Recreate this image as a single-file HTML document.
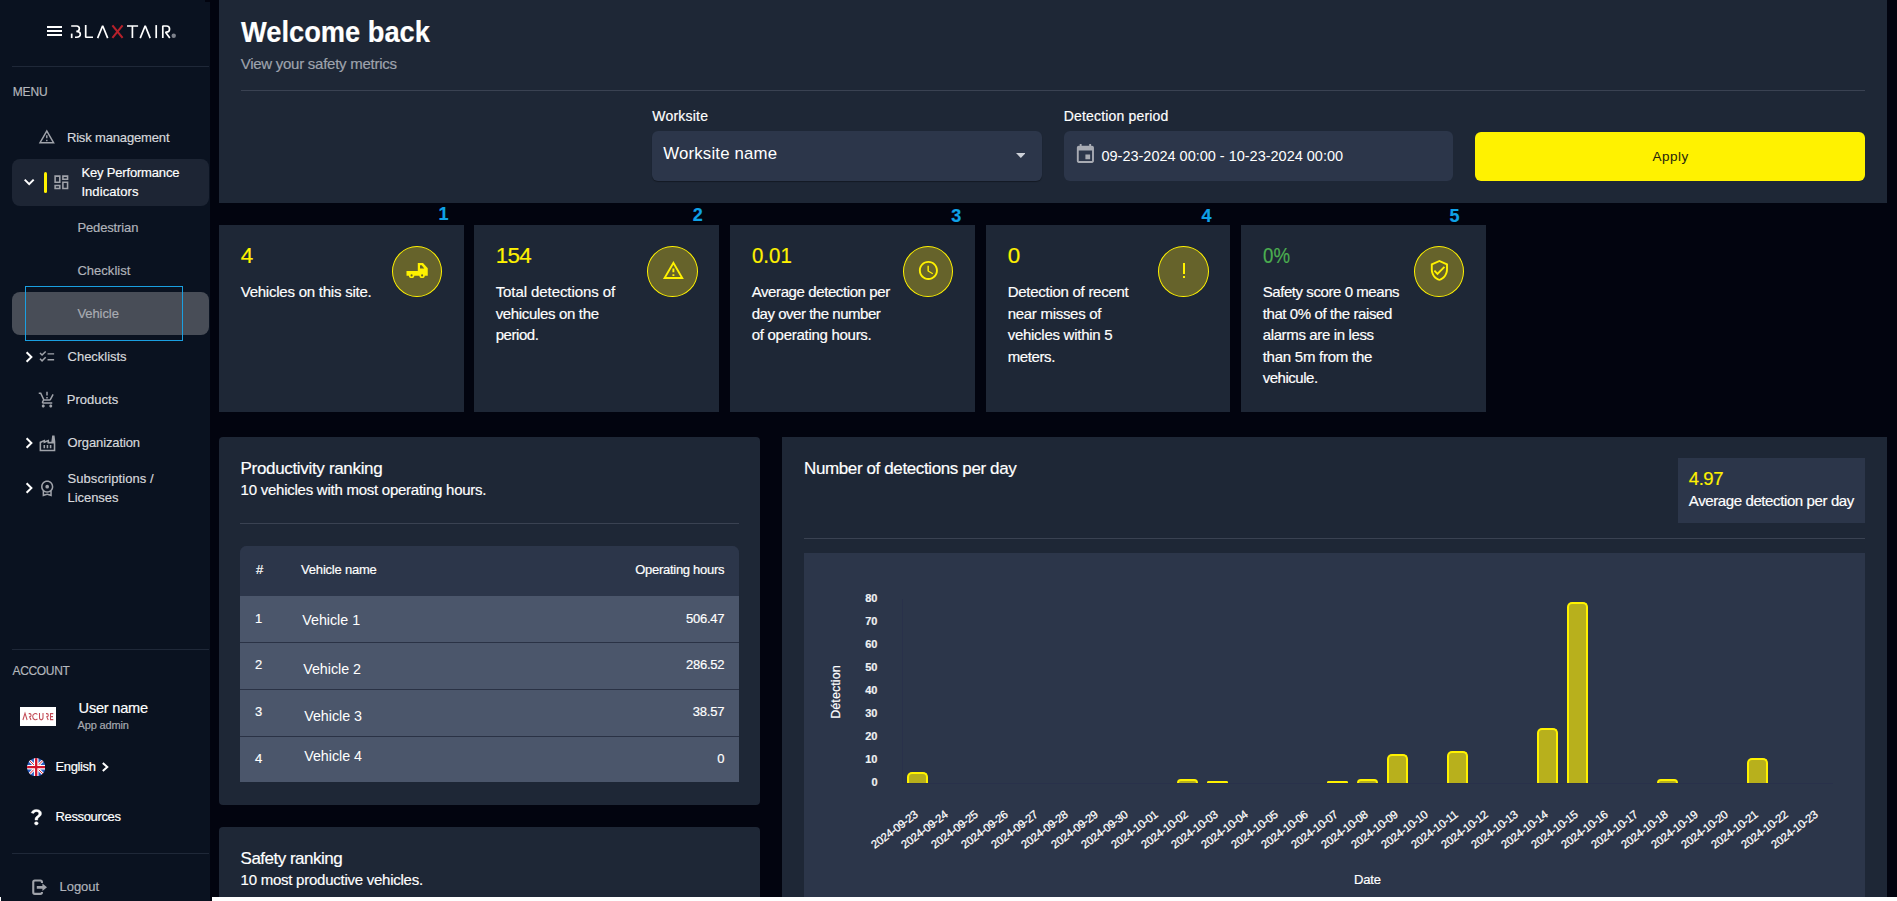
<!DOCTYPE html>
<html lang="en">
<head>
<meta charset="utf-8">
<title>Dashboard</title>
<style>
*{box-sizing:border-box;margin:0;padding:0}
html,body{width:1897px;height:901px;overflow:hidden;background:#02040f;font-family:"Liberation Sans",sans-serif;color:#fff}
.abs{position:absolute}
.t{position:absolute;white-space:nowrap;line-height:1;-webkit-text-stroke:0.18px}
#side{position:absolute;left:0;top:0;width:210px;height:901px;background:#0a1220}
.hr{position:absolute;height:1px;background:#1f2838}
.card{position:absolute;background:#1e2736}
</style>
</head>
<body>
<div id="side"></div>
<div class="abs" style="left:205px;top:0;width:5px;height:1.6px;background:#02040f"></div>
<div class="card" style="left:219px;top:0;width:1668px;height:203px"></div>
<div class="card" style="left:219px;top:225px;width:245px;height:187px"></div>
<div class="card" style="left:474px;top:225px;width:245px;height:187px"></div>
<div class="card" style="left:730px;top:225px;width:245px;height:187px"></div>
<div class="card" style="left:986px;top:225px;width:244px;height:187px"></div>
<div class="card" style="left:1241px;top:225px;width:245px;height:187px"></div>
<div class="card" style="left:219px;top:437px;width:541px;height:368px;border-radius:4px"></div>
<div class="card" style="left:219px;top:827px;width:541px;height:80px;border-radius:4px 4px 0 0"></div>
<div class="card" style="left:782px;top:437px;width:1105px;height:470px"></div>
<!-- sidebar -->
<div class="abs" style="left:46.7px;top:26.2px;width:15.4px;height:1.8px;background:#fff"></div>
<div class="abs" style="left:46.7px;top:30.15px;width:15.4px;height:1.8px;background:#fff"></div>
<div class="abs" style="left:46.7px;top:34.1px;width:15.4px;height:1.8px;background:#fff"></div>
<svg class="abs" style="left:65px;top:20px" width="120" height="25" viewBox="65 20 120 25" fill="none" stroke="#fff" stroke-width="1.7" stroke-linejoin="bevel">
<path d="M71.2 26 H76.6 C80.3 26 80.3 31.4 76.3 31.4 C81.6 31.4 81.6 37.25 76.6 37.25 H75"/>
<path d="M71.7 33.6 V38.1"/>
<path d="M85.7 25.1 V37.25 H93"/>
<path d="M97.6 38.1 L102.65 25.7 L107.7 38.1"/>
<path d="M112.4 25.4 L122.6 37.9 M122.6 25.4 L112.4 37.9" stroke="#b6212b" stroke-width="2.1"/>
<path d="M127 26 H138.1 M132.4 26 V38.1"/>
<path d="M140.2 38.1 L145.2 25.7 L150.2 38.1"/>
<path d="M156.2 25.1 V38.1"/>
<path d="M162.8 38.1 V26 H166.4 C170.6 26 170.6 32.2 166.4 32.2 H165.6 L169.8 38.1"/>
<circle cx="173.7" cy="35.8" r="2.2" fill="#7d818b" stroke="none"/>
</svg>
<div class="hr" style="left:12px;top:66px;width:197px"></div>
<span class="t" style="top:86px;font-size:12px;color:#b4b7bd;left:12.7px;letter-spacing:-0.15px;">MENU</span>
<svg class="abs" style="left:38.3px;top:128.4px" width="17.6" height="17.6" viewBox="0 0 24 24" fill="#a0a3aa" ><path d="M12 5.99L19.53 19H4.47L12 5.99M12 2L1 21h22L12 2zm1 14h-2v2h2v-2zm0-6h-2v4h2v-4z"/></svg>
<span class="t" style="top:131px;font-size:13px;color:#d6d8dc;left:66.9px;letter-spacing:-0.15px;">Risk management</span>
<div class="abs" style="left:12px;top:159px;width:197px;height:47px;border-radius:8px;background:#1d2534"></div>
<svg class="abs" style="left:23px;top:177px" width="13" height="10" viewBox="0 0 13 10" fill="none" stroke="#fff" stroke-width="2"><path d="M1.7 2.6 L6.2 7.1 L10.7 2.6"/></svg>
<div class="abs" style="left:44px;top:172px;width:3.2px;height:21px;border-radius:2px;background:#fff200"></div>
<svg class="abs" style="left:51.7px;top:172.7px" width="18.7" height="18.7" viewBox="0 0 24 24" fill="#a0a3aa" ><path d="M19 5v2h-4V5h4M9 5v6H5V5h4m10 8v6h-4v-6h4M9 17v2H5v-2h4M21 3h-8v6h8V3zM11 3H3v10h8V3zm10 8h-8v10h8V11zm-10 4H3v6h8v-6z"/></svg>
<span class="t" style="top:166px;font-size:13px;color:#fff;left:81.4px;letter-spacing:-0.17px;">Key Performance</span>
<span class="t" style="top:185px;font-size:13px;color:#fff;left:81.4px;letter-spacing:0.07px;">Indicators</span>
<span class="t" style="top:221px;font-size:13px;color:#b0b3ba;left:77.4px;letter-spacing:-0.13px;">Pedestrian</span>
<span class="t" style="top:264px;font-size:13px;color:#b0b3ba;left:77.4px;letter-spacing:0.03px;">Checklist</span>
<div class="abs" style="left:12px;top:292px;width:197px;height:43px;border-radius:8px;background:#484d57"></div>
<span class="t" style="top:307px;font-size:13px;color:#a9acb3;left:77.4px;letter-spacing:-0.07px;">Vehicle</span>
<div class="abs" style="left:25px;top:286px;width:158px;height:55px;border:1px solid #1a9fe0"></div>
<svg class="abs" style="left:24.9px;top:351.3px" width="9" height="12" viewBox="0 0 9 12" fill="none" stroke="#fff" stroke-width="2"><path d="M1.6 1.2 L6.4 6 L1.6 10.8"/></svg>
<svg class="abs" style="left:38.4px;top:348.2px" width="17.6" height="17.6" viewBox="0 0 24 24" fill="#a0a3aa" ><path d="M22 7h-9v2h9V7zm0 8h-9v2h9v-2zM5.54 11L2 7.46l1.41-1.41 2.12 2.12 4.24-4.24 1.41 1.41L5.54 11zm0 8L2 15.46l1.41-1.41 2.12 2.12 4.24-4.24 1.41 1.41L5.54 19z"/></svg>
<span class="t" style="top:350px;font-size:13px;color:#d6d8dc;left:67.6px;letter-spacing:-0.03px;">Checklists</span>
<svg class="abs" style="left:38.4px;top:391px" width="18" height="18" viewBox="0 0 24 24" fill="#a0a3aa" ><path d="M13 10h-2V8h2v2zm0-4h-2V1h2v5zM7 18c-1.1 0-1.99.9-1.99 2S5.9 22 7 22s2-.9 2-2-.9-2-2-2zm10 0c-1.1 0-1.99.9-1.99 2s.89 2 1.99 2 2-.9 2-2-.9-2-2-2zm-8.9-5h7.45c.75 0 1.41-.41 1.75-1.03L21 4.96 19.25 4l-3.7 7H8.53L4.27 2H1v2h2l3.6 7.59-1.35 2.44C4.52 15.37 5.48 17 7 17h12v-2H7l1.1-2z"/></svg>
<span class="t" style="top:393px;font-size:13px;color:#d6d8dc;left:66.7px;letter-spacing:0.03px;">Products</span>
<svg class="abs" style="left:24.9px;top:437.2px" width="9" height="12" viewBox="0 0 9 12" fill="none" stroke="#fff" stroke-width="2"><path d="M1.6 1.2 L6.4 6 L1.6 10.8"/></svg>
<svg class="abs" style="left:37.6px;top:433.8px" width="18.9" height="18.9" viewBox="0 0 24 24" fill="#a0a3aa" ><path d="M22 22H2V10l7-3v2l5-2v3h3l1-8h3l1 8V22zM12 9.95l-5 2V10l-3 1.32V20h16v-8h-8V9.95zM11 18h2v-4h-2V18zM7 18h2v-4H7V18zM17 14h-2v4h2V14z"/></svg>
<span class="t" style="top:436px;font-size:13px;color:#d6d8dc;left:67.6px;letter-spacing:-0.11px;">Organization</span>
<svg class="abs" style="left:24.9px;top:482px" width="9" height="12" viewBox="0 0 9 12" fill="none" stroke="#fff" stroke-width="2"><path d="M1.6 1.2 L6.4 6 L1.6 10.8"/></svg>
<svg class="abs" style="left:37.9px;top:479px" width="18.4" height="18.4" viewBox="0 0 24 24" fill="#a0a3aa" ><path d="M12 7.6a2.4 2.4 0 1 0 0 4.8a2.4 2.4 0 1 0 0-4.8zM20 10c0-4.42-3.58-8-8-8s-8 3.58-8 8c0 2.03.76 3.87 2 5.28V23l6-2 6 2v-7.72c1.24-1.41 2-3.25 2-5.28zm-8-6c3.31 0 6 2.69 6 6s-2.69 6-6 6-6-2.69-6-6 2.69-6 6-6zm0 15l-4 1.02v-3.1c1.18.68 2.54 1.08 4 1.08s2.82-.4 4-1.08v3.1L12 19z"/></svg>
<span class="t" style="top:472px;font-size:13px;color:#d6d8dc;left:67.6px;letter-spacing:0.05px;">Subscriptions /</span>
<span class="t" style="top:491px;font-size:13px;color:#d6d8dc;left:67.6px;letter-spacing:-0.07px;">Licenses</span>
<div class="hr" style="left:12px;top:649px;width:197px"></div>
<span class="t" style="top:665px;font-size:12px;color:#b4b7bd;left:12.5px;letter-spacing:-0.34px;">ACCOUNT</span>
<div class="abs" style="left:20px;top:707px;width:36px;height:19px;background:#fff"></div>
<svg class="abs" style="left:20px;top:707px" width="36" height="19" viewBox="20 707 36 19" fill="none" stroke="#c24a55" stroke-width="1.05">
<path d="M22.9 720 L25 713.2 L27.1 720"/>
<path d="M28.7 713.6 H29.6 C31.6 713.6 31.6 716.7 29.6 716.7 L31 720"/>
<path d="M37.4 714.5 C35.8 712.7 32.7 713.5 32.7 716.6 C32.7 719.8 35.8 720.5 37.5 718.8"/>
<path d="M39.5 713.1 V717.6 C39.5 720.6 43 720.6 43 717.6 V713.1"/>
<path d="M46 713.6 H46.8 C48.8 713.6 48.8 716.7 46.8 716.7 L48.2 720"/>
<path d="M53.3 713.6 H50.5 V719.6 H53.3 M50.5 716.6 H53"/>
</svg>
<span class="t" style="top:701px;font-size:14.6px;color:#fff;left:78.6px;letter-spacing:-0.23px;">User name</span>
<span class="t" style="top:720px;font-size:11px;color:#a7aab1;left:77.6px;letter-spacing:-0.15px;">App admin</span>
<svg class="abs" style="left:26.8px;top:757.5px" width="18.4" height="18.4" viewBox="0 0 60 60">
<defs><clipPath id="fc"><circle cx="30" cy="30" r="30"/></clipPath></defs>
<g clip-path="url(#fc)">
<rect width="60" height="60" fill="#2b5dc0"/>
<path d="M0 0 L60 60 M60 0 L0 60" stroke="#fff" stroke-width="9"/>
<path d="M0 0 L60 60 M60 0 L0 60" stroke="#d0142c" stroke-width="3"/>
<path d="M30 0 V60 M0 30 H60" stroke="#fff" stroke-width="15"/>
<path d="M30 0 V60 M0 30 H60" stroke="#d0142c" stroke-width="7.5"/>
</g></svg>
<span class="t" style="top:760px;font-size:13px;color:#fff;left:55.5px;letter-spacing:-0.36px;">English</span>
<svg class="abs" style="left:101.3px;top:760.9px" width="10" height="13" viewBox="0 0 10 13" fill="none" stroke="#fff" stroke-width="2"><path d="M1.8 1.9 L6.3 6 L1.8 10.1"/></svg>
<svg class="abs" style="left:24.8px;top:807.1px" width="22.7" height="19.6" viewBox="0 0 24 24" preserveAspectRatio="none" fill="#fff" stroke="#fff" stroke-width="0.45"><path d="M11.07 12.85c.77-1.39 2.25-2.21 3.11-3.44.91-1.29.4-3.7-2.18-3.7-1.69 0-2.52 1.28-2.87 2.34L6.54 6.96C7.25 4.83 9.18 3 11.99 3c2.35 0 3.96 1.07 4.78 2.41.7 1.15 1.11 3.3.03 4.9-1.2 1.77-2.35 2.31-2.97 3.45-.25.46-.35.76-.35 2.24h-2.89c-.01-.78-.13-2.05.48-3.15zM14 20c0 1.1-.9 2-2 2s-2-.9-2-2 .9-2 2-2 2 .9 2 2z"/></svg>
<span class="t" style="top:810px;font-size:13px;color:#fff;left:55.5px;letter-spacing:-0.36px;">Ressources</span>
<div class="hr" style="left:12px;top:853px;width:197px"></div>
<svg class="abs" style="left:31px;top:878px" width="18" height="19" viewBox="31 878 18 19" fill="none">
<path d="M41.95 882.9 V882 Q41.95 880.45 40.4 880.45 H34.8 Q33.25 880.45 33.25 882 V892.3 Q33.25 893.85 34.8 893.85 H40.4 Q41.95 893.85 41.95 892.3 V891.9" stroke="#a0a3aa" stroke-width="2.1"/>
<path d="M36.8 886 H42.4 V883.6 L47 887.35 L42.4 891.1 V888.7 H36.8 Z" fill="#a0a3aa"/>
</svg>
<span class="t" style="top:880px;font-size:13px;color:#b0b3ba;left:59.5px;letter-spacing:-0.03px;">Logout</span>
<!-- header -->
<span class="t" style="top:17px;font-size:30px;color:#fff;left:240.7px;font-weight:bold;transform:scaleX(0.9087);transform-origin:0 0;">Welcome back</span>
<span class="t" style="top:56px;font-size:15px;color:#9ea3ad;left:240.7px;letter-spacing:-0.26px;">View your safety metrics</span>
<div class="hr" style="left:241px;top:90px;width:1624px;background:#3a4252"></div>
<span class="t" style="top:109px;font-size:14px;color:#fff;left:652.3px;letter-spacing:0.21px;">Worksite</span>
<div class="abs" style="left:652px;top:131px;width:390px;height:49.5px;border-radius:6px;background:#2c364a;box-shadow:0 1px 1px rgba(0,0,0,.35)"></div>
<span class="t" style="top:146px;font-size:16.8px;color:#fff;left:663.2px;letter-spacing:0.19px;-webkit-text-stroke:0;">Worksite name</span>
<svg class="abs" style="left:1015.5px;top:152.8px" width="9.6" height="5" viewBox="0 0 10 5" fill="#cdd1d8"><path d="M0 0 L10 0 L5 5Z"/></svg>
<span class="t" style="top:109px;font-size:14px;color:#fff;left:1063.8px;letter-spacing:0.17px;">Detection period</span>
<div class="abs" style="left:1064px;top:131px;width:389px;height:49.5px;border-radius:6px;background:#2c364a"></div>
<svg class="abs" style="left:1073.8px;top:143px" width="22.8" height="22.8" viewBox="0 0 24 24" fill="#a8abb3"><path d="M17 12h-5v5h5v-5zM16 1v2H8V1H6v2H5c-1.11 0-1.99.9-1.99 2L3 19c0 1.1.89 2 2 2h14c1.1 0 2-.9 2-2V5c0-1.1-.9-2-2-2h-1V1h-2zm3 18H5V8h14v11z"/></svg>
<span class="t" style="top:149px;font-size:14.5px;color:#fff;left:1101.5px;letter-spacing:-0.01px;-webkit-text-stroke:0;">09-23-2024 00:00 - 10-23-2024 00:00</span>
<div class="abs" style="left:1475px;top:132px;width:390px;height:48.5px;border-radius:6px;background:#fff200"></div>
<span class="t" style="top:150px;font-size:13.5px;color:#25250f;left:1652.4px;letter-spacing:0.5px;-webkit-text-stroke:0;">Apply</span>
<!-- kpi -->
<span class="t" style="top:205px;font-size:18px;color:#0fa1e6;left:438.6px;font-weight:bold;">1</span>
<span class="t" style="top:206px;font-size:18px;color:#0fa1e6;left:692.7px;font-weight:bold;">2</span>
<span class="t" style="top:207px;font-size:18px;color:#0fa1e6;left:951.3px;font-weight:bold;">3</span>
<span class="t" style="top:207px;font-size:18px;color:#0fa1e6;left:1201.4px;font-weight:bold;">4</span>
<span class="t" style="top:207px;font-size:18px;color:#0fa1e6;left:1449.4px;font-weight:bold;">5</span>
<span class="t" style="top:245px;font-size:22.4px;color:#fff200;left:240.7px;">4</span>
<span class="t" style="top:284px;font-size:15px;color:#fff;left:240.7px;letter-spacing:-0.23px;">Vehicles on this site.</span>
<div class="abs" style="left:392px;top:245.8px;width:50.1px;height:51px;border-radius:50%;background:#66632b;border:1px solid #fff200"></div>
<svg class="abs" style="left:400px;top:258px" width="35" height="25" viewBox="400 258 35 25" fill="#fff200"><path fill-rule="evenodd" d="M406.5 271.1 H417.8 V263 H423 L427.75 268.3 V275.8 H406.5 Z M420 265.3 H421.7 L424.3 268.6 H420 Z"/><circle cx="411.6" cy="275.4" r="2.7"/><circle cx="422.1" cy="275.4" r="2.7"/><circle cx="411.6" cy="275.4" r="1.05" fill="#66632b"/><circle cx="422.1" cy="275.4" r="1.05" fill="#66632b"/></svg>
<span class="t" style="top:245px;font-size:22.4px;color:#fff200;left:495.7px;letter-spacing:-0.68px;">154</span>
<span class="t" style="top:284px;font-size:15px;color:#fff;left:495.7px;letter-spacing:-0.08px;">Total detections of</span>
<span class="t" style="top:306px;font-size:15px;color:#fff;left:495.7px;letter-spacing:-0.34px;">vehicules on the</span>
<span class="t" style="top:327px;font-size:15px;color:#fff;left:495.7px;letter-spacing:-0.45px;">period.</span>
<div class="abs" style="left:647px;top:245.8px;width:50.8px;height:51px;border-radius:50%;background:#66632b;border:1px solid #fff200"></div>
<svg class="abs" style="left:661.5px;top:259.20000000000005px" width="22.8" height="22.8" viewBox="0 0 24 24" fill="#fff200"><path d="M12 5.99L19.53 19H4.47L12 5.99M12 2L1 21h22L12 2zm1 14h-2v2h2v-2zm0-6h-2v4h2v-4z"/></svg>
<span class="t" style="top:245px;font-size:22.4px;color:#fff200;left:751.7px;transform:scaleX(0.913);transform-origin:0 0;">0.01</span>
<span class="t" style="top:284px;font-size:15px;color:#fff;left:751.7px;letter-spacing:-0.4px;">Average detection per</span>
<span class="t" style="top:306px;font-size:15px;color:#fff;left:751.7px;letter-spacing:-0.47px;">day over the number</span>
<span class="t" style="top:327px;font-size:15px;color:#fff;left:751.7px;letter-spacing:-0.28px;">of operating hours.</span>
<div class="abs" style="left:903px;top:245.8px;width:50.1px;height:51px;border-radius:50%;background:#66632b;border:1px solid #fff200"></div>
<svg class="abs" style="left:917.15px;top:259.20000000000005px" width="22.8" height="22.8" viewBox="0 0 24 24" fill="#fff200"><path d="M11.99 2C6.47 2 2 6.48 2 12s4.47 10 9.99 10C17.52 22 22 17.52 22 12S17.52 2 11.99 2zM12 20c-4.42 0-8-3.58-8-8s3.58-8 8-8 8 3.58 8 8-3.58 8-8 8zm.5-13H11v6l5.25 3.15.75-1.23-4.5-2.67z"/></svg>
<span class="t" style="top:245px;font-size:22.4px;color:#fff200;left:1007.7px;">0</span>
<span class="t" style="top:284px;font-size:15px;color:#fff;left:1007.7px;letter-spacing:-0.27px;">Detection of recent</span>
<span class="t" style="top:306px;font-size:15px;color:#fff;left:1007.7px;letter-spacing:-0.29px;">near misses of</span>
<span class="t" style="top:327px;font-size:15px;color:#fff;left:1007.7px;letter-spacing:-0.27px;">vehicles within 5</span>
<span class="t" style="top:349px;font-size:15px;color:#fff;left:1007.7px;letter-spacing:-0.4px;">meters.</span>
<div class="abs" style="left:1158px;top:245.8px;width:50.8px;height:51px;border-radius:50%;background:#66632b;border:1px solid #fff200"></div>
<div class="abs" style="left:1182.9px;top:263px;width:2.6px;height:11px;background:#fff200"></div>
<div class="abs" style="left:1182.9px;top:276px;width:2.6px;height:2.2px;background:#fff200"></div>
<span class="t" style="top:245px;font-size:22.4px;color:#4caf50;left:1262.7px;transform:scaleX(0.834);transform-origin:0 0;">0%</span>
<span class="t" style="top:284px;font-size:15px;color:#fff;left:1262.7px;letter-spacing:-0.43px;">Safety score 0 means</span>
<span class="t" style="top:306px;font-size:15px;color:#fff;left:1262.7px;letter-spacing:-0.4px;">that 0% of the raised</span>
<span class="t" style="top:327px;font-size:15px;color:#fff;left:1262.7px;letter-spacing:-0.36px;">alarms are in less</span>
<span class="t" style="top:349px;font-size:15px;color:#fff;left:1262.7px;letter-spacing:-0.25px;">than 5m from the</span>
<span class="t" style="top:370px;font-size:15px;color:#fff;left:1262.7px;letter-spacing:-0.48px;">vehicule.</span>
<div class="abs" style="left:1414px;top:245.8px;width:50.1px;height:51px;border-radius:50%;background:#66632b;border:1px solid #fff200"></div>
<svg class="abs" style="left:1428.1499999999999px;top:259.20000000000005px" width="22.8" height="22.8" viewBox="0 0 24 24" fill="#fff200"><path d="M12 1L3 5v6c0 5.55 3.84 10.74 9 12 5.16-1.26 9-6.45 9-12V5l-9-4zm7 10c0 4.52-2.98 8.69-7 9.93-4.02-1.24-7-5.41-7-9.93V6.3l7-3.11 7 3.11V11zm-11.59.59L6 13l4 4 8-8-1.41-1.42L10 14.17z"/></svg>
<!-- productivity -->
<span class="t" style="top:460px;font-size:17px;color:#fff;left:240.6px;letter-spacing:-0.33px;">Productivity ranking</span>
<span class="t" style="top:482px;font-size:15px;color:#fff;left:240.6px;letter-spacing:-0.25px;">10 vehicles with most operating hours.</span>
<div class="hr" style="left:240px;top:523px;width:499px;background:#3a4252"></div>
<div class="abs" style="left:240px;top:546px;width:499px;height:236px;border-radius:6.5px 6.5px 0 0;background:#2a3245;overflow:hidden">
<div class="abs" style="left:0;top:0;width:499px;height:49.6px;background:#2c364a"></div>
<div class="abs" style="left:0;top:50px;width:499px;height:45.8px;background:#4b566b"></div>
<div class="abs" style="left:0;top:96.6px;width:499px;height:46.4px;background:#4b566b"></div>
<div class="abs" style="left:0;top:144px;width:499px;height:46.2px;background:#4b566b"></div>
<div class="abs" style="left:0;top:191.2px;width:499px;height:45px;background:#4b566b"></div></div>
<span class="t" style="top:563px;font-size:13px;color:#fff;left:255.9px;">#</span>
<span class="t" style="top:563px;font-size:13px;color:#fff;left:301.1px;letter-spacing:-0.21px;">Vehicle name</span>
<span class="t" style="top:563px;font-size:13px;color:#fff;left:635.30px;letter-spacing:-0.29px;">Operating hours</span>
<span class="t" style="top:612px;font-size:13px;color:#fff;left:254.9px;">1</span>
<span class="t" style="top:613px;font-size:14.3px;color:#fff;left:302.3px;letter-spacing:-0.03px;-webkit-text-stroke:0;">Vehicle 1</span>
<span class="t" style="top:612px;font-size:13px;color:#fff;left:686.00px;letter-spacing:-0.25px;">506.47</span>
<span class="t" style="top:658px;font-size:13px;color:#fff;left:254.9px;">2</span>
<span class="t" style="top:662px;font-size:14.3px;color:#fff;left:303.2px;letter-spacing:-0.03px;-webkit-text-stroke:0;">Vehicle 2</span>
<span class="t" style="top:658px;font-size:13px;color:#fff;left:686.00px;letter-spacing:-0.25px;">286.52</span>
<span class="t" style="top:705px;font-size:13px;color:#fff;left:254.9px;">3</span>
<span class="t" style="top:709px;font-size:14.3px;color:#fff;left:304.2px;letter-spacing:-0.03px;-webkit-text-stroke:0;">Vehicle 3</span>
<span class="t" style="top:705px;font-size:13px;color:#fff;left:692.70px;letter-spacing:-0.19px;">38.57</span>
<span class="t" style="top:752px;font-size:13px;color:#fff;left:254.9px;">4</span>
<span class="t" style="top:749px;font-size:14.3px;color:#fff;left:304.2px;letter-spacing:-0.03px;-webkit-text-stroke:0;">Vehicle 4</span>
<span class="t" style="top:752px;font-size:13px;color:#fff;left:717.27px;">0</span>
<span class="t" style="top:850px;font-size:17px;color:#fff;left:240.6px;letter-spacing:-0.51px;">Safety ranking</span>
<span class="t" style="top:872px;font-size:15px;color:#fff;left:240.6px;letter-spacing:-0.25px;">10 most productive vehicles.</span>
<!-- chart -->
<span class="t" style="top:460px;font-size:17px;color:#fff;left:804px;letter-spacing:-0.38px;">Number of detections per day</span>
<div class="abs" style="left:1678px;top:458.2px;width:187px;height:64.4px;background:#2c364a"></div>
<span class="t" style="top:470px;font-size:18.5px;color:#fff200;left:1688.8px;letter-spacing:-0.44px;">4.97</span>
<span class="t" style="top:493px;font-size:15px;color:#fff;left:1688.8px;letter-spacing:-0.39px;">Average detection per day</span>
<div class="hr" style="left:804px;top:538px;width:1061px;background:#3a4252"></div>
<div class="abs" style="left:804px;top:552.8px;width:1061px;height:344px;background:#2c364a"></div>
<div class="abs" style="left:902px;top:599.4px;width:1px;height:184px;background:#29314a;opacity:.9"></div>
<div class="abs" style="left:902px;top:783px;width:931px;height:1px;background:#29314a;opacity:.9"></div>
<span class="t" style="top:777px;font-size:11px;color:#f0f1f3;left:871.38px;font-weight:bold;">0</span>
<span class="t" style="top:754px;font-size:11px;color:#f0f1f3;left:865.25px;font-weight:bold;">10</span>
<span class="t" style="top:731px;font-size:11px;color:#f0f1f3;left:865.25px;font-weight:bold;">20</span>
<span class="t" style="top:708px;font-size:11px;color:#f0f1f3;left:865.25px;font-weight:bold;">30</span>
<span class="t" style="top:685px;font-size:11px;color:#f0f1f3;left:865.25px;font-weight:bold;">40</span>
<span class="t" style="top:662px;font-size:11px;color:#f0f1f3;left:865.25px;font-weight:bold;">50</span>
<span class="t" style="top:639px;font-size:11px;color:#f0f1f3;left:865.25px;font-weight:bold;">60</span>
<span class="t" style="top:616px;font-size:11px;color:#f0f1f3;left:865.25px;font-weight:bold;">70</span>
<span class="t" style="top:593px;font-size:11px;color:#f0f1f3;left:865.25px;font-weight:bold;">80</span>
<span class="t" style="left:835.5px;top:691.5px;font-size:12.5px;color:#fff;transform:translate(-50%,-50%) rotate(-90deg);letter-spacing:0.1px">Détection</span>
<div class="abs" style="left:906.9px;top:772.1px;width:21.4px;height:11.1px;background:#b8b01c;border:2px solid #fff200;border-bottom:0;border-radius:5.0px 5.0px 0 0"></div>
<div class="abs" style="left:1176.9px;top:779.0px;width:21.4px;height:4.2px;background:#b8b01c;border:2px solid #fff200;border-bottom:0;border-radius:3.8px 3.8px 0 0"></div>
<div class="abs" style="left:1206.9px;top:781.3px;width:21.4px;height:1.9px;background:#b8b01c;border:2px solid #fff200;border-bottom:0;border-radius:1.7px 1.7px 0 0"></div>
<div class="abs" style="left:1326.9px;top:781.3px;width:21.4px;height:1.9px;background:#b8b01c;border:2px solid #fff200;border-bottom:0;border-radius:1.7px 1.7px 0 0"></div>
<div class="abs" style="left:1356.9px;top:779.0px;width:21.4px;height:4.2px;background:#b8b01c;border:2px solid #fff200;border-bottom:0;border-radius:3.8px 3.8px 0 0"></div>
<div class="abs" style="left:1386.9px;top:753.7px;width:21.4px;height:29.5px;background:#b8b01c;border:2px solid #fff200;border-bottom:0;border-radius:5.0px 5.0px 0 0"></div>
<div class="abs" style="left:1446.9px;top:751.4px;width:21.4px;height:31.8px;background:#b8b01c;border:2px solid #fff200;border-bottom:0;border-radius:5.0px 5.0px 0 0"></div>
<div class="abs" style="left:1536.9px;top:728.4px;width:21.4px;height:54.8px;background:#b8b01c;border:2px solid #fff200;border-bottom:0;border-radius:5.0px 5.0px 0 0"></div>
<div class="abs" style="left:1566.9px;top:601.9px;width:21.4px;height:181.3px;background:#b8b01c;border:2px solid #fff200;border-bottom:0;border-radius:5.0px 5.0px 0 0"></div>
<div class="abs" style="left:1656.9px;top:779.0px;width:21.4px;height:4.2px;background:#b8b01c;border:2px solid #fff200;border-bottom:0;border-radius:3.8px 3.8px 0 0"></div>
<div class="abs" style="left:1746.9px;top:758.3px;width:21.4px;height:24.9px;background:#b8b01c;border:2px solid #fff200;border-bottom:0;border-radius:5.0px 5.0px 0 0"></div>
<svg class="abs" style="left:804px;top:553px" width="1061" height="344" viewBox="804 553 1061 344" font-family="Liberation Sans, sans-serif" font-size="11.4" fill="#fff" stroke="#fff" stroke-width="0.25"><text x="918.8" y="816.0" text-anchor="end" textLength="55" lengthAdjust="spacing" transform="rotate(-37 918.8 816.0)">2024-09-23</text><text x="948.8" y="816.0" text-anchor="end" textLength="55" lengthAdjust="spacing" transform="rotate(-37 948.8 816.0)">2024-09-24</text><text x="978.8" y="816.0" text-anchor="end" textLength="55" lengthAdjust="spacing" transform="rotate(-37 978.8 816.0)">2024-09-25</text><text x="1008.8" y="816.0" text-anchor="end" textLength="55" lengthAdjust="spacing" transform="rotate(-37 1008.8 816.0)">2024-09-26</text><text x="1038.8" y="816.0" text-anchor="end" textLength="55" lengthAdjust="spacing" transform="rotate(-37 1038.8 816.0)">2024-09-27</text><text x="1068.8" y="816.0" text-anchor="end" textLength="55" lengthAdjust="spacing" transform="rotate(-37 1068.8 816.0)">2024-09-28</text><text x="1098.8" y="816.0" text-anchor="end" textLength="55" lengthAdjust="spacing" transform="rotate(-37 1098.8 816.0)">2024-09-29</text><text x="1128.8" y="816.0" text-anchor="end" textLength="55" lengthAdjust="spacing" transform="rotate(-37 1128.8 816.0)">2024-09-30</text><text x="1158.8" y="816.0" text-anchor="end" textLength="55" lengthAdjust="spacing" transform="rotate(-37 1158.8 816.0)">2024-10-01</text><text x="1188.8" y="816.0" text-anchor="end" textLength="55" lengthAdjust="spacing" transform="rotate(-37 1188.8 816.0)">2024-10-02</text><text x="1218.8" y="816.0" text-anchor="end" textLength="55" lengthAdjust="spacing" transform="rotate(-37 1218.8 816.0)">2024-10-03</text><text x="1248.8" y="816.0" text-anchor="end" textLength="55" lengthAdjust="spacing" transform="rotate(-37 1248.8 816.0)">2024-10-04</text><text x="1278.8" y="816.0" text-anchor="end" textLength="55" lengthAdjust="spacing" transform="rotate(-37 1278.8 816.0)">2024-10-05</text><text x="1308.8" y="816.0" text-anchor="end" textLength="55" lengthAdjust="spacing" transform="rotate(-37 1308.8 816.0)">2024-10-06</text><text x="1338.8" y="816.0" text-anchor="end" textLength="55" lengthAdjust="spacing" transform="rotate(-37 1338.8 816.0)">2024-10-07</text><text x="1368.8" y="816.0" text-anchor="end" textLength="55" lengthAdjust="spacing" transform="rotate(-37 1368.8 816.0)">2024-10-08</text><text x="1398.8" y="816.0" text-anchor="end" textLength="55" lengthAdjust="spacing" transform="rotate(-37 1398.8 816.0)">2024-10-09</text><text x="1428.8" y="816.0" text-anchor="end" textLength="55" lengthAdjust="spacing" transform="rotate(-37 1428.8 816.0)">2024-10-10</text><text x="1458.8" y="816.0" text-anchor="end" textLength="55" lengthAdjust="spacing" transform="rotate(-37 1458.8 816.0)">2024-10-11</text><text x="1488.8" y="816.0" text-anchor="end" textLength="55" lengthAdjust="spacing" transform="rotate(-37 1488.8 816.0)">2024-10-12</text><text x="1518.8" y="816.0" text-anchor="end" textLength="55" lengthAdjust="spacing" transform="rotate(-37 1518.8 816.0)">2024-10-13</text><text x="1548.8" y="816.0" text-anchor="end" textLength="55" lengthAdjust="spacing" transform="rotate(-37 1548.8 816.0)">2024-10-14</text><text x="1578.8" y="816.0" text-anchor="end" textLength="55" lengthAdjust="spacing" transform="rotate(-37 1578.8 816.0)">2024-10-15</text><text x="1608.8" y="816.0" text-anchor="end" textLength="55" lengthAdjust="spacing" transform="rotate(-37 1608.8 816.0)">2024-10-16</text><text x="1638.8" y="816.0" text-anchor="end" textLength="55" lengthAdjust="spacing" transform="rotate(-37 1638.8 816.0)">2024-10-17</text><text x="1668.8" y="816.0" text-anchor="end" textLength="55" lengthAdjust="spacing" transform="rotate(-37 1668.8 816.0)">2024-10-18</text><text x="1698.8" y="816.0" text-anchor="end" textLength="55" lengthAdjust="spacing" transform="rotate(-37 1698.8 816.0)">2024-10-19</text><text x="1728.8" y="816.0" text-anchor="end" textLength="55" lengthAdjust="spacing" transform="rotate(-37 1728.8 816.0)">2024-10-20</text><text x="1758.8" y="816.0" text-anchor="end" textLength="55" lengthAdjust="spacing" transform="rotate(-37 1758.8 816.0)">2024-10-21</text><text x="1788.8" y="816.0" text-anchor="end" textLength="55" lengthAdjust="spacing" transform="rotate(-37 1788.8 816.0)">2024-10-22</text><text x="1818.8" y="816.0" text-anchor="end" textLength="55" lengthAdjust="spacing" transform="rotate(-37 1818.8 816.0)">2024-10-23</text></svg>
<span class="t" style="top:873px;font-size:13px;color:#fff;left:1353.9px;letter-spacing:-0.09px;">Date</span>
<div class="abs" style="left:212px;top:897px;width:1685px;height:4px;background:#fff"></div>
<div class="abs" style="left:0;top:897px;width:1px;height:4px;background:#fff"></div>
</body>
</html>
